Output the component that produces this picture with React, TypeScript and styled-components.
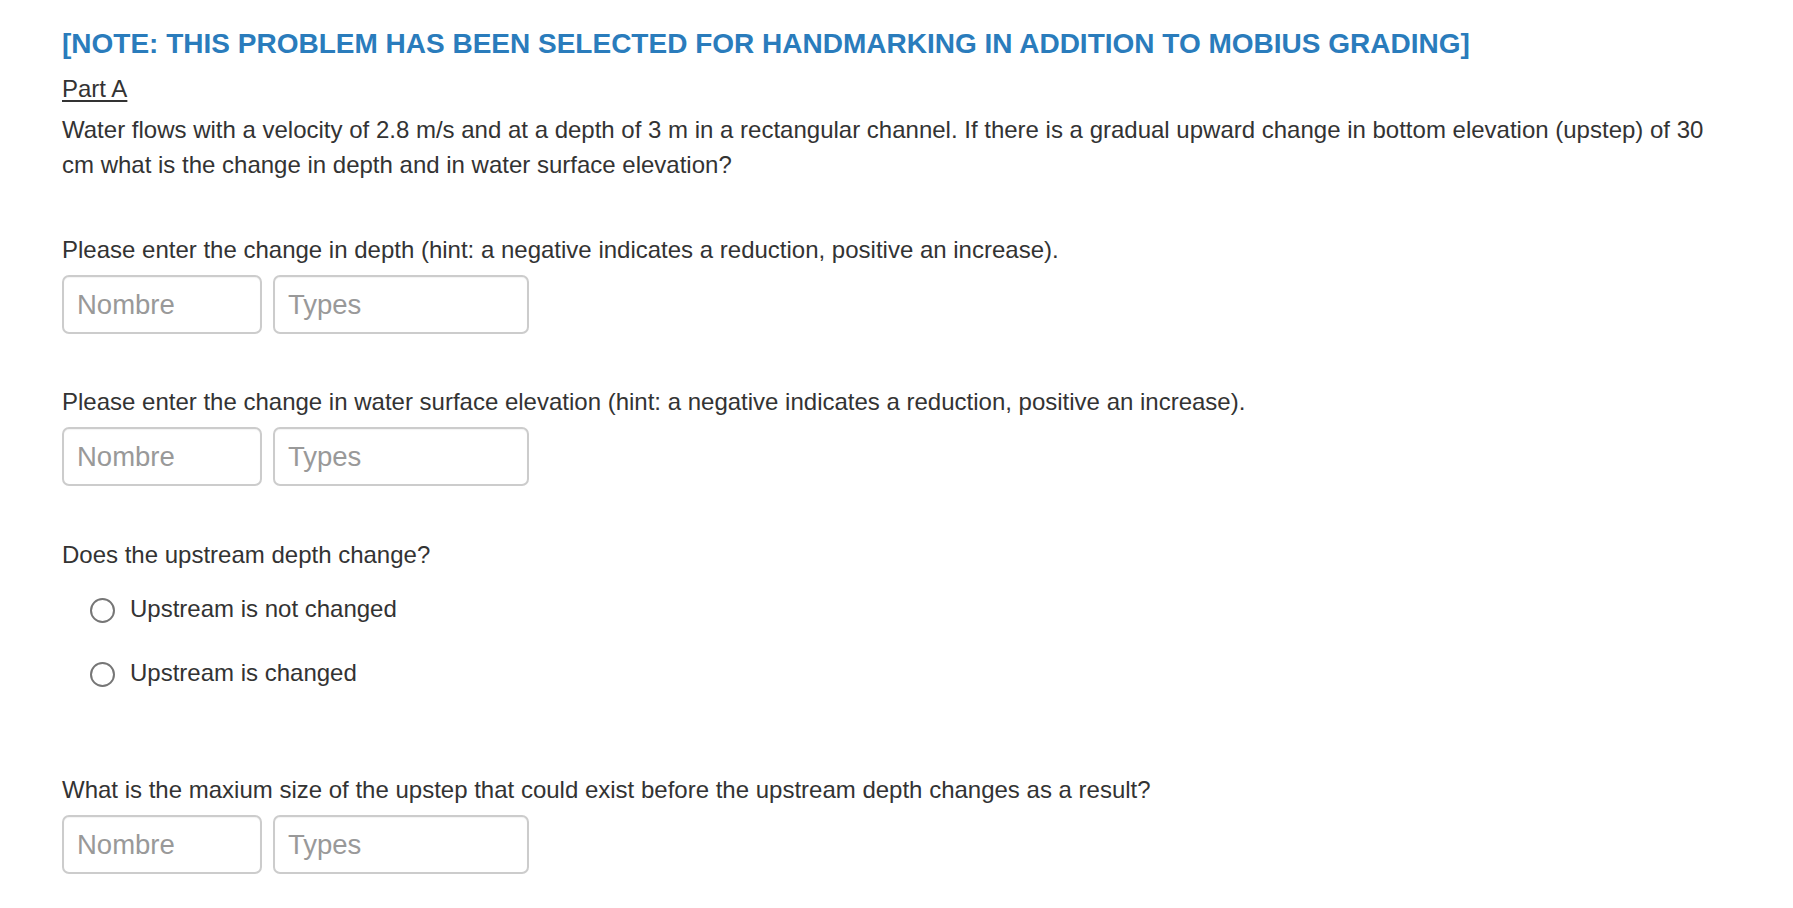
import React from "react";
import { createGlobalStyle, styled } from "styled-components";

const GlobalStyle = createGlobalStyle`
  html, body {
    margin: 0;
    padding: 0;
    background: #ffffff;
  }
  body {
    font-family: "Liberation Sans", Arial, sans-serif;
    color: #333333;
  }
`;

type Question = {
  label: string;
};

const numberQuestions: Question[] = [
  { label: "Please enter the change in depth (hint: a negative indicates a reduction, positive an increase)." },
  { label: "Please enter the change in water surface elevation (hint: a negative indicates a reduction, positive an increase)." },
];

const radioOptions = ["Upstream is not changed", "Upstream is changed"];

const AnswerInputs = (): React.ReactNode => (
  <InputRow>
    <NumberField placeholder="Nombre" $width={200} />
    <NumberField placeholder="Types" $width={256} />
  </InputRow>
);

const App = (): React.ReactNode => {
  return (
    <>
      <GlobalStyle />
      <Page>
        <Note>[NOTE: THIS PROBLEM HAS BEEN SELECTED FOR HANDMARKING IN ADDITION TO MOBIUS GRADING]</Note>
        <PartTitle>Part A</PartTitle>
        <Statement>
          Water flows with a velocity of 2.8 m/s and at a depth of 3 m in a rectangular channel. If there is a
          gradual upward change in bottom elevation (upstep) of 30 cm what is the change in depth and in water
          surface elevation?
        </Statement>

        {numberQuestions.map(q => (
          <Block key={q.label} $top={51}>
            <Label>{q.label}</Label>
            <AnswerInputs />
          </Block>
        ))}

        <Block $top={52}>
          <Label>Does the upstream depth change?</Label>
          <RadioList>
            {radioOptions.map(option => (
              <RadioRow key={option}>
                <RadioCircle type="radio" name="upstream" />
                <span>{option}</span>
              </RadioRow>
            ))}
          </RadioList>
        </Block>

        <Block $top={83}>
          <Label>What is the maxium size of the upstep that could exist before the upstream depth changes as a result?</Label>
          <AnswerInputs />
        </Block>
      </Page>
    </>
  );
};

const Page = styled.main`
  box-sizing: border-box;
  width: 1793px;
  min-height: 908px;
  padding: 27px 62px 0;
  font-size: 24px;
  line-height: 34px;
`;
const Note = styled.h2`
  margin: 0;
  font-size: 28px;
  line-height: 34px;
  font-weight: bold;
  color: #2a7cbc;
`;
const PartTitle = styled.div`
  margin-top: 11px;
  text-decoration: underline;
  text-underline-offset: 3px;
`;
const Statement = styled.p`
  margin: 6px 0 0;
  line-height: 35px;
`;
const Block = styled.section<{ $top: number }>`
  margin-top: ${({ $top }) => $top}px;
`;
const Label = styled.div`
  line-height: 34px;
`;
const InputRow = styled.div`
  display: flex;
  gap: 11px;
  margin-top: 8px;
`;
const NumberField = styled.input<{ $width: number }>`
  box-sizing: border-box;
  width: ${({ $width }) => $width}px;
  height: 59px;
  padding: 0 13px;
  border: 2px solid #cccccc;
  border-radius: 7px;
  background: #ffffff;
  box-shadow: inset 0 1px 1px rgba(0, 0, 0, 0.05);
  font-family: "Liberation Sans", Arial, sans-serif;
  font-size: 27.5px;
  color: #333333;
  outline: none;

  &::placeholder {
    color: #999999;
  }
`;
const RadioList = styled.div`
  display: flex;
  flex-direction: column;
  gap: 30px;
  margin-top: 20px;
  padding-left: 28px;
`;
const RadioRow = styled.label`
  display: flex;
  align-items: center;
  gap: 15px;
  height: 34px;
`;
const RadioCircle = styled.input`
  appearance: none;
  box-sizing: border-box;
  width: 25px;
  height: 25px;
  margin: 2px 0 0;
  border: 2px solid #767676;
  border-radius: 50%;
  background: #ffffff;
`;

export default App;
